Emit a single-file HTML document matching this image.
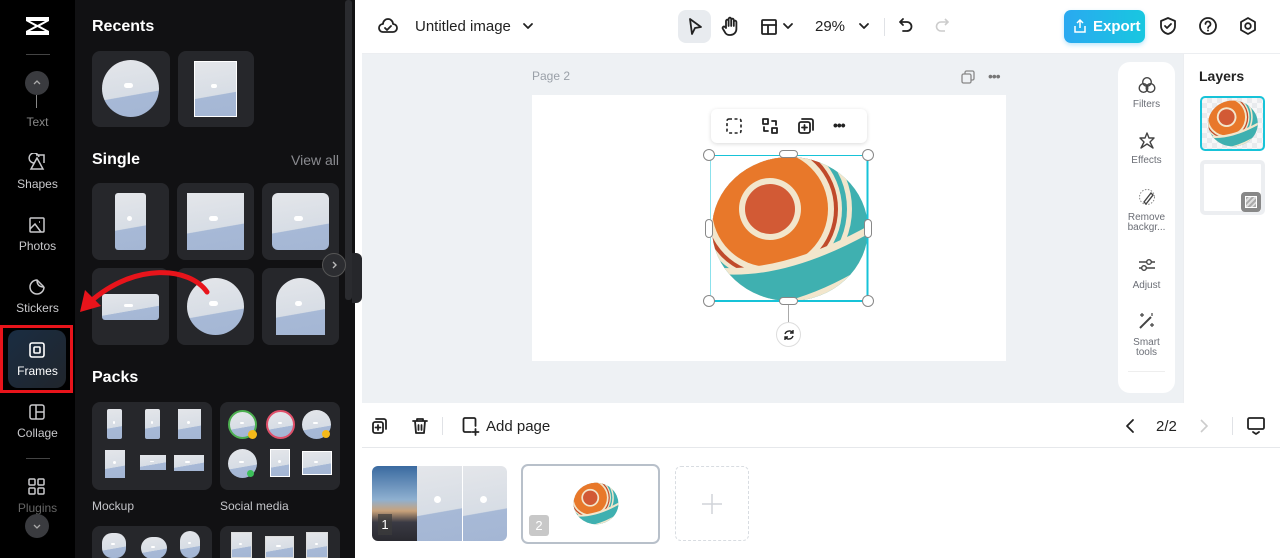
<!DOCTYPE html>
<html><head><meta charset="utf-8"><style>
*{box-sizing:border-box;margin:0;padding:0}
html,body{width:1280px;height:558px;overflow:hidden}
body{font-family:"Liberation Sans",sans-serif;background:#fff;position:relative}
.a{position:absolute}
.rail{left:0;top:0;width:75px;height:558px;background:#000}
.panel{left:75px;top:0;width:280px;height:558px;background:#111113}
.rl{position:absolute;left:0;width:75px;text-align:center;color:#c9c9cc;font-size:12px}
.card{position:absolute;background:#26272b;border-radius:8px}
.sky{position:absolute;background:linear-gradient(170deg,#e4e6ea 0%,#d7dde5 60%,#a7b9d6 61%,#a4b6d4 100%);overflow:hidden}
.sky:after{content:"";position:absolute;left:38%;top:40%;width:16%;height:9%;background:#fff;border-radius:6px}
.h{color:#fff;font-weight:bold;font-size:16px;position:absolute;left:92px}
.ic{stroke:#c9c9cc;fill:none;stroke-width:1.5}
.dk{stroke:#222;fill:none;stroke-width:1.8;stroke-linecap:round;stroke-linejoin:round}
.tl{position:absolute;left:0;width:57px;text-align:center;font-size:10px;color:#6b6e76;line-height:10px}
</style></head><body>
<svg width="0" height="0" style="position:absolute"><defs>
<clipPath id="c"><ellipse cx="80" cy="74" rx="78" ry="72"/></clipPath>
<g id="ball"><g clip-path="url(#c)">
<rect width="160" height="148" fill="#3fb0b0"/>
<circle cx="60" cy="54" r="82" fill="#f2e6cc"/>
<circle cx="60" cy="54" r="77" fill="#3fb0b0"/>
<circle cx="60" cy="54" r="72" fill="#f2e6cc"/>
<circle cx="60" cy="54" r="68" fill="#c04a2a"/>
<circle cx="60" cy="54" r="64" fill="#f2e6cc"/>
<circle cx="60" cy="54" r="58" fill="#e8782a"/>
<path d="M0 112 Q70 120 160 70 L160 148 L0 148Z" fill="#f2e6cc"/>
<path d="M0 118 Q70 128 160 78 L160 148 L0 148Z" fill="#3fb0b0"/>
<path d="M60 150 Q110 140 160 108 L160 116 Q110 146 70 152Z" fill="#f2e6cc"/>
<circle cx="60" cy="54" r="31" fill="#f2e6cc"/>
<circle cx="60" cy="54" r="25" fill="#d25a35"/>
</g></g></defs></svg>
<div class="a rail"></div>
<div class="a panel"></div>
<!-- rail -->
<svg class="a" style="left:24px;top:14px" width="27" height="24" viewBox="0 0 27 24"><path d="M2 3 L25 3 L25 7 L16 12 L25 17 L25 21 L2 21 L2 17 L11 12 L2 7Z" fill="#fff"/><path d="M6 7 L21 7 L13.5 11Z M6 17 L21 17 L13.5 13Z" fill="#000"/></svg>
<div class="a" style="left:26px;top:54px;width:24px;height:1px;background:#444"></div>
<div class="a" style="left:25px;top:71px;width:24px;height:24px;border-radius:50%;background:#3a3b3f"></div>
<svg class="a" style="left:31px;top:77px" width="12" height="12"><path d="M3 7 L6 4 L9 7" stroke="#aaa" fill="none" stroke-width="1.3"/></svg>
<div class="a" style="left:36px;top:95px;width:1px;height:13px;background:#888"></div>
<div class="rl" style="top:115px;color:#888">Text</div>
<svg class="a" style="left:27px;top:153px" width="20" height="20"><path class="ic" d="M7 10 a5 5 0 1 1 5-6 M10 5 L16 16 L4 16Z M9 2 h8 v8"/></svg>
<div class="rl" style="top:177px">Shapes</div>
<svg class="a" style="left:28px;top:216px" width="18" height="18"><rect class="ic" x="2" y="2" width="14" height="14" rx="1"/><path class="ic" d="M2 13 L7 8 L13 16 M11 6 h1"/></svg>
<div class="rl" style="top:239px">Photos</div>
<svg class="a" style="left:27px;top:277px" width="20" height="20"><path class="ic" d="M17 10 a7 7 0 1 1 -7-7 L17 10 M10 3 q0 7 7 7"/></svg>
<div class="rl" style="top:301px">Stickers</div>
<div class="a" style="left:0;top:325px;width:73px;height:68px;border:3px solid #e8141b"></div>
<div class="a" style="left:8px;top:330px;width:58px;height:58px;border-radius:10px;background:linear-gradient(135deg,#1a2d42,#20252c)"></div>
<svg class="a" style="left:28px;top:341px" width="18" height="18"><rect x="2" y="2" width="14" height="14" rx="2" stroke="#fff" fill="none" stroke-width="1.6"/><rect x="6" y="6" width="6" height="6" rx="1" stroke="#fff" fill="none" stroke-width="1.6"/></svg>
<div class="rl" style="top:364px;color:#fff">Frames</div>
<svg class="a" style="left:28px;top:403px" width="18" height="18"><rect class="ic" x="2" y="2" width="14" height="14" rx="2"/><path class="ic" d="M8 2 V16 M8 9 H16"/></svg>
<div class="rl" style="top:426px">Collage</div>
<div class="a" style="left:26px;top:458px;width:24px;height:1px;background:#444"></div>
<svg class="a" style="left:27px;top:477px" width="20" height="20"><rect class="ic" x="2" y="2" width="6" height="6" rx="1"/><rect class="ic" x="11" y="2" width="6" height="6" rx="1"/><rect class="ic" x="2" y="11" width="6" height="6" rx="1"/><rect class="ic" x="11" y="11" width="6" height="6" rx="1"/></svg>
<div class="rl" style="top:501px;color:#666">Plugins</div>
<div class="a" style="left:25px;top:514px;width:24px;height:24px;border-radius:50%;background:#3a3b3f"></div>
<svg class="a" style="left:31px;top:520px" width="12" height="12"><path d="M3 5 L6 8 L9 5" stroke="#aaa" fill="none" stroke-width="1.3"/></svg>
<!-- panel -->
<div class="h" style="top:18px">Recents</div>
<div class="card" style="left:92px;top:51px;width:78px;height:76px"></div>
<div class="sky" style="left:102px;top:60px;width:57px;height:57px;border-radius:50%"></div>
<div class="card" style="left:178px;top:51px;width:76px;height:76px"></div>
<div class="sky" style="left:194px;top:61px;width:43px;height:56px;border:1px solid #fff"></div>
<div class="h" style="top:151px">Single</div>
<div class="a" style="left:291px;top:152px;color:#8a8b90;font-size:14px">View all</div>
<div class="card" style="left:92px;top:183px;width:77px;height:77px"></div>
<div class="sky" style="left:115px;top:193px;width:31px;height:57px;border-radius:3px"></div>
<div class="card" style="left:177px;top:183px;width:77px;height:77px"></div>
<div class="sky" style="left:187px;top:193px;width:57px;height:57px"></div>
<div class="card" style="left:262px;top:183px;width:77px;height:77px"></div>
<div class="sky" style="left:272px;top:193px;width:57px;height:57px;border-radius:6px"></div>
<div class="card" style="left:92px;top:268px;width:77px;height:77px"></div>
<div class="sky" style="left:102px;top:294px;width:57px;height:26px;border-radius:3px"></div>
<div class="card" style="left:177px;top:268px;width:77px;height:77px"></div>
<div class="sky" style="left:187px;top:278px;width:57px;height:57px;border-radius:50%"></div>
<div class="card" style="left:262px;top:268px;width:77px;height:77px"></div>
<div class="sky" style="left:276px;top:278px;width:49px;height:57px;border-radius:25px 25px 0 0"></div>
<div class="a" style="left:345px;top:0;width:7px;height:300px;border-radius:3px;background:#2a2b2f"></div>
<div class="a" style="left:322px;top:253px;width:24px;height:24px;border-radius:50%;background:#2c2d31;border:1px solid #555"></div>
<svg class="a" style="left:328px;top:259px" width="12" height="12"><path d="M5 3 L8 6 L5 9" stroke="#bbb" fill="none" stroke-width="1.4"/></svg>
<div class="a" style="left:352px;top:253px;width:10px;height:50px;border-radius:0 6px 6px 0;background:#26272b"></div>
<svg class="a" style="left:75px;top:262px" width="140" height="60"><path d="M132 30 C115 5 60 0 15 40" stroke="#e8141b" stroke-width="5" fill="none" stroke-linecap="round"/><path d="M5 50 L10 28 L26 44Z" fill="#e8141b"/></svg>
<div class="h" style="top:369px">Packs</div>
<div class="card" style="left:92px;top:402px;width:120px;height:88px"></div>
<div class="sky" style="left:107px;top:409px;width:15px;height:30px;border-radius:2px"></div>
<div class="sky" style="left:145px;top:409px;width:15px;height:30px;border-radius:2px"></div>
<div class="sky" style="left:178px;top:409px;width:23px;height:30px"></div>
<div class="sky" style="left:105px;top:450px;width:20px;height:28px"></div>
<div class="sky" style="left:140px;top:455px;width:26px;height:15px"></div>
<div class="sky" style="left:174px;top:455px;width:30px;height:16px"></div>
<div class="card" style="left:220px;top:402px;width:120px;height:88px"></div>
<div class="sky" style="left:228px;top:410px;width:29px;height:29px;border-radius:50%;border:2px solid #4caf50"></div>
<div class="sky" style="left:266px;top:410px;width:29px;height:29px;border-radius:50%;border:2px solid #e0506a"></div>
<div class="sky" style="left:302px;top:410px;width:29px;height:29px;border-radius:50%"></div>
<div class="a" style="left:248px;top:430px;width:9px;height:9px;border-radius:50%;background:#f5b91a"></div>
<div class="a" style="left:322px;top:430px;width:8px;height:8px;border-radius:50%;background:#f5b91a"></div>
<div class="sky" style="left:228px;top:449px;width:29px;height:29px;border-radius:50%"></div>
<div class="a" style="left:247px;top:470px;width:7px;height:7px;border-radius:50%;background:#3cbf5a"></div>
<div class="sky" style="left:270px;top:449px;width:20px;height:28px;border:1px solid #fff"></div>
<div class="sky" style="left:302px;top:451px;width:30px;height:24px;border:1px solid #fff"></div>
<div class="a" style="left:92px;top:499px;color:#c4c5c9;font-size:12px">Mockup</div>
<div class="a" style="left:220px;top:499px;color:#c4c5c9;font-size:12px">Social media</div>
<div class="card" style="left:92px;top:526px;width:120px;height:40px"></div>
<div class="sky" style="left:102px;top:533px;width:24px;height:25px;border-radius:10px"></div>
<div class="sky" style="left:141px;top:537px;width:26px;height:22px;border-radius:11px"></div>
<div class="sky" style="left:180px;top:531px;width:20px;height:27px;border-radius:10px"></div>
<div class="card" style="left:220px;top:526px;width:120px;height:40px"></div>
<div class="sky" style="left:231px;top:532px;width:21px;height:26px;border:1px solid #ddd"></div>
<div class="sky" style="left:265px;top:536px;width:29px;height:22px;border:1px solid #ddd"></div>
<div class="sky" style="left:306px;top:532px;width:22px;height:26px;border:1px solid #ddd"></div>
<!-- top bar -->
<div class="a" style="left:362px;top:0;width:918px;height:54px;background:#fff;border-bottom:1px solid #eceef1"></div>
<svg class="a" style="left:378px;top:17px" width="20" height="18"><path class="dk" d="M5 15 a4 4 0 0 1 0-8 a5 5 0 0 1 10 0 a4 4 0 0 1 0 8Z M7 11 l2 2 l4-4"/></svg>
<div class="a" style="left:415px;top:18px;font-size:15px;color:#222">Untitled image</div>
<svg class="a" style="left:522px;top:20px" width="12" height="12"><path class="dk" d="M2 4 L6 8 L10 4"/></svg>
<div class="a" style="left:678px;top:10px;width:33px;height:33px;border-radius:8px;background:#e8ebef"></div>
<svg class="a" style="left:686px;top:17px" width="18" height="20"><path class="dk" d="M4 2 L15 10 L9 11 L6 17Z"/></svg>
<svg class="a" style="left:720px;top:16px" width="20" height="22"><path class="dk" d="M6 12 V5 a1.3 1.3 0 0 1 2.6 0 V10 V3 a1.3 1.3 0 0 1 2.6 0 V10 V4 a1.3 1.3 0 0 1 2.6 0 V10 V6 a1.3 1.3 0 0 1 2.6 0 V13 a6 6 0 0 1-6 6 h-1 a5 5 0 0 1-4-2 L3 13 a1.3 1.3 0 0 1 2-2Z"/></svg>
<svg class="a" style="left:760px;top:18px" width="18" height="18"><rect class="dk" x="2" y="2" width="14" height="14" rx="1"/><path class="dk" d="M2 7 H16 M8 7 V16"/></svg>
<svg class="a" style="left:782px;top:21px" width="12" height="10"><path class="dk" d="M2 3 L6 7 L10 3"/></svg>
<div class="a" style="left:815px;top:18px;font-size:15px;color:#222">29%</div>
<svg class="a" style="left:858px;top:21px" width="12" height="10"><path class="dk" d="M2 3 L6 7 L10 3"/></svg>
<div class="a" style="left:884px;top:18px;width:1px;height:18px;background:#e0e2e6"></div>
<svg class="a" style="left:897px;top:17px" width="18" height="18"><path class="dk" d="M6 2 L3 5 L6 8 M3 5 H10 a4.5 4.5 0 0 1 0 9 H6"/></svg>
<svg class="a" style="left:933px;top:17px" width="18" height="18"><path d="M12 2 L15 5 L12 8 M15 5 H8 a4.5 4.5 0 0 0 0 9 H12" stroke="#ccc" fill="none" stroke-width="1.6"/></svg>
<div class="a" style="left:1064px;top:10px;width:81px;height:33px;border-radius:7px;background:linear-gradient(90deg,#2aa9f0,#18c7e0);box-shadow:0 2px 5px rgba(30,170,240,.3)"></div>
<svg class="a" style="left:1072px;top:18px" width="16" height="16"><path d="M3 8 V14 H13 V8 M8 10 V2 M5 5 L8 2 L11 5" stroke="#fff" fill="none" stroke-width="1.5"/></svg>
<div class="a" style="left:1093px;top:18px;font-size:15px;font-weight:bold;color:#fff">Export</div>
<svg class="a" style="left:1158px;top:16px" width="20" height="20"><path class="dk" d="M10 2 L17 5 V10 C17 14 14 17 10 18 C6 17 3 14 3 10 V5Z M7 10 l2 2 l4-4"/></svg>
<svg class="a" style="left:1198px;top:16px" width="20" height="20"><circle class="dk" cx="10" cy="10" r="8"/><path class="dk" d="M7.5 8 a2.5 2.5 0 1 1 3.5 2.3 C10 11 10 11.5 10 12"/><circle cx="10" cy="14.5" r="1" fill="#222"/></svg>
<svg class="a" style="left:1238px;top:16px" width="20" height="20"><path class="dk" d="M10 2 L17 6 V14 L10 18 L3 14 V6Z"/><circle class="dk" cx="10" cy="10" r="2.8"/></svg>
<!-- canvas -->
<div class="a" style="left:362px;top:54px;width:821px;height:349px;background:#eef1f4"></div>
<div class="a" style="left:532px;top:69px;font-size:12px;color:#9aa0a8">Page 2</div>
<svg class="a" style="left:960px;top:69px" width="16" height="16"><rect x="5" y="2" width="9" height="9" rx="1.5" stroke="#888" fill="none" stroke-width="1.3"/><rect x="2" y="5" width="9" height="9" rx="1.5" stroke="#888" fill="#eef1f4" stroke-width="1.3"/></svg>
<div class="a" style="left:988px;top:68px;font-size:14px;color:#777;letter-spacing:-1px">•••</div>
<div class="a" style="left:532px;top:95px;width:474px;height:266px;background:#fff"></div>
<svg class="a" style="left:710px;top:155px" width="160" height="148" viewBox="0 0 160 148"><use href="#ball"/>
<rect x="-0.5" y="0" width="158" height="146" fill="none" stroke="#17c3d8" stroke-width="2"/></svg>
<div class="a" style="left:711px;top:109px;width:156px;height:34px;background:#fff;border-radius:6px;box-shadow:0 1px 4px rgba(0,0,0,.15)"></div>
<svg class="a" style="left:725px;top:117px" width="18" height="18"><rect x="2" y="2" width="14" height="14" rx="2" stroke="#222" fill="none" stroke-width="1.6" stroke-dasharray="3 2.5"/></svg>
<svg class="a" style="left:761px;top:117px" width="18" height="18"><rect class="dk" x="2" y="2" width="5" height="5"/><rect class="dk" x="11" y="11" width="5" height="5"/><path class="dk" d="M11 4 H15 V8 M7 14 H3 V10"/></svg>
<svg class="a" style="left:797px;top:117px" width="18" height="18"><rect class="dk" x="2" y="5" width="11" height="11" rx="2"/><path class="dk" d="M5 2 H14 a2 2 0 0 1 2 2 V13 M7.5 8 V13 M5 10.5 H10"/></svg>
<div class="a" style="left:833px;top:117px;font-size:14px;color:#222;font-weight:bold;letter-spacing:-1px">•••</div>
<div class="a" style="left:703px;top:149px;width:12px;height:12px;border-radius:50%;background:#fff;border:1px solid #888"></div>
<div class="a" style="left:862px;top:149px;width:12px;height:12px;border-radius:50%;background:#fff;border:1px solid #888"></div>
<div class="a" style="left:703px;top:295px;width:12px;height:12px;border-radius:50%;background:#fff;border:1px solid #888"></div>
<div class="a" style="left:862px;top:295px;width:12px;height:12px;border-radius:50%;background:#fff;border:1px solid #888"></div>
<div class="a" style="left:779px;top:150px;width:19px;height:8px;border-radius:4px;background:#fff;border:1px solid #888"></div>
<div class="a" style="left:779px;top:297px;width:19px;height:8px;border-radius:4px;background:#fff;border:1px solid #888"></div>
<div class="a" style="left:705px;top:219px;width:8px;height:19px;border-radius:4px;background:#fff;border:1px solid #888"></div>
<div class="a" style="left:864px;top:219px;width:8px;height:19px;border-radius:4px;background:#fff;border:1px solid #888"></div>
<div class="a" style="left:788px;top:305px;width:1px;height:17px;background:#aaa"></div>
<div class="a" style="left:776px;top:322px;width:25px;height:25px;border-radius:50%;background:#fff;border:1px solid #ddd"></div>
<svg class="a" style="left:782px;top:328px" width="14" height="14"><path d="M11 5 a4.5 4.5 0 0 0-8 1 M3 9 a4.5 4.5 0 0 0 8-1 M11 2 V5 H8 M3 12 V9 H6" stroke="#222" fill="none" stroke-width="1.4"/></svg>
<!-- tools -->
<div class="a" style="left:1118px;top:62px;width:57px;height:331px;background:#fff;border-radius:12px"></div>
<svg class="a" style="left:1137px;top:75px" width="20" height="20"><circle cx="10" cy="7" r="4.3" stroke="#444" fill="none" stroke-width="1.4"/><circle cx="6.5" cy="13" r="4.3" stroke="#444" fill="none" stroke-width="1.4"/><circle cx="13.5" cy="13" r="4.3" stroke="#444" fill="none" stroke-width="1.4"/></svg>
<div class="tl" style="left:1118px;top:100px">Filters</div>
<svg class="a" style="left:1137px;top:131px" width="20" height="20"><path d="M10 2 L12 7 L17 7 L13 11 L16 17 L10 13 L4 17 L7 11 L3 7 L8 7Z" stroke="#444" fill="none" stroke-width="1.4" stroke-linejoin="round"/></svg>
<div class="tl" style="left:1118px;top:156px">Effects</div>
<svg class="a" style="left:1137px;top:187px" width="20" height="20"><circle cx="10" cy="10" r="7.5" stroke="#888" fill="none" stroke-width="1" stroke-dasharray="1.5 1.5"/><path d="M7 15 L14 6 L16 8 L9 17Z" stroke="#444" fill="#fff" stroke-width="1.4"/></svg>
<div class="tl" style="left:1118px;top:213px">Remove<br>backgr...</div>
<svg class="a" style="left:1137px;top:255px" width="20" height="20"><path d="M2 7 H18 M2 13 H18" stroke="#444" stroke-width="1.4"/><circle cx="12" cy="7" r="2.3" fill="#fff" stroke="#444" stroke-width="1.4"/><circle cx="7" cy="13" r="2.3" fill="#fff" stroke="#444" stroke-width="1.4"/></svg>
<div class="tl" style="left:1118px;top:281px">Adjust</div>
<svg class="a" style="left:1137px;top:311px" width="20" height="20"><path d="M3 17 L14 6" stroke="#444" stroke-width="2"/><path d="M5 2 V6 M3 4 H7 M15 12 V16 M13 14 H17 M15 2 v3" stroke="#444" stroke-width="1.2"/></svg>
<div class="tl" style="left:1118px;top:338px">Smart<br>tools</div>
<div class="a" style="left:1128px;top:371px;width:37px;height:1px;background:#eee"></div>
<!-- layers -->
<div class="a" style="left:1183px;top:54px;width:97px;height:349px;background:#fff;border-left:1px solid #eceef1"></div>
<div class="a" style="left:1199px;top:68px;font-size:14px;font-weight:bold;color:#222">Layers</div>
<div class="a" style="left:1200px;top:96px;width:65px;height:55px;border:2px solid #17c3d8;border-radius:5px;background:repeating-conic-gradient(#e8eaed 0 25%,#f7f7f8 0 50%) 0 0/10px 10px"></div>
<svg class="a" style="left:1207px;top:100px" width="52" height="47" viewBox="0 0 160 148"><use href="#ball"/></svg>
<div class="a" style="left:1200px;top:160px;width:65px;height:55px;border:4px solid #eceef1;border-radius:5px;background:#fff"></div>
<div class="a" style="left:1241px;top:192px;width:20px;height:20px;border-radius:4px;background:#888"></div>
<div class="a" style="left:1245px;top:196px;width:12px;height:12px;border:1px solid #fff;background:repeating-linear-gradient(135deg,#aaa 0 2px,#ddd 2px 4px)"></div>
<!-- bottom -->
<div class="a" style="left:362px;top:403px;width:918px;height:45px;background:#fff;border-bottom:1px solid #e6e8eb"></div>
<svg class="a" style="left:371px;top:417px" width="18" height="18"><rect class="dk" x="2" y="5" width="10" height="11" rx="2"/><path class="dk" d="M5 2 H13 a2 2 0 0 1 2 2 V12 M7 8 V13 M4.5 10.5 H9.5"/></svg>
<svg class="a" style="left:411px;top:417px" width="18" height="18"><path class="dk" d="M2 4 H16 M6 4 V2 H12 V4 M4 4 L5 16 H13 L14 4 M7.5 8 V13 M10.5 8 V13"/></svg>
<div class="a" style="left:442px;top:417px;width:1px;height:18px;background:#e0e2e6"></div>
<svg class="a" style="left:461px;top:416px" width="20" height="20"><path class="dk" d="M10 16 H4 a1.5 1.5 0 0 1-1.5-1.5 V3.5 A1.5 1.5 0 0 1 4 2 H13 a1.5 1.5 0 0 1 1.5 1.5 V10 M14.5 13 V19 M11.5 16 H17.5"/></svg>
<div class="a" style="left:486px;top:418px;font-size:15px;color:#222">Add page</div>
<svg class="a" style="left:1122px;top:417px" width="16" height="18"><path class="dk" d="M11 3 L5 9 L11 15"/></svg>
<div class="a" style="left:1156px;top:418px;font-size:15px;color:#222">2/2</div>
<svg class="a" style="left:1196px;top:417px" width="16" height="18"><path d="M5 3 L11 9 L5 15" stroke="#ccc" fill="none" stroke-width="1.6"/></svg>
<div class="a" style="left:1232px;top:417px;width:1px;height:18px;background:#e0e2e6"></div>
<svg class="a" style="left:1246px;top:416px" width="20" height="20"><rect class="dk" x="2" y="2" width="16" height="11" rx="1.5"/><path class="dk" d="M7 16 L10 18 L13 16"/></svg>
<div class="a" style="left:372px;top:466px;width:135px;height:75px;border-radius:6px;overflow:hidden">
 <div class="a" style="left:0;top:0;width:45px;height:75px;background:linear-gradient(180deg,#3a6aa0 0%,#8fb0d0 45%,#c9a27a 60%,#3a3a44 75%,#2a2a30 100%)"></div>
 <div class="sky" style="left:45px;top:0;width:45px;height:75px"></div>
 <div class="sky" style="left:91px;top:0;width:44px;height:75px"></div>
 <div class="a" style="left:90px;top:0;width:1px;height:75px;background:#fff"></div>
 <div class="a" style="left:6px;top:48px;width:14px;height:21px;background:rgba(60,60,60,.7);color:#fff;font-size:13px;text-align:center;line-height:21px">1</div>
</div>
<div class="a" style="left:521px;top:464px;width:139px;height:80px;border:2px solid #b8c0ca;border-radius:7px;background:#fff"></div>
<svg class="a" style="left:573px;top:482px" width="46" height="43" viewBox="0 0 160 148"><use href="#ball"/></svg>
<div class="a" style="left:529px;top:515px;width:20px;height:21px;border-radius:3px;background:#c8c8c8;color:#fff;font-size:13px;text-align:center;line-height:21px">2</div>
<div class="a" style="left:675px;top:466px;width:74px;height:75px;border:1px dashed #d8dce1;border-radius:6px"></div>
<svg class="a" style="left:700px;top:492px" width="24" height="24"><path d="M12 2 V22 M2 12 H22" stroke="#d0d4d9" stroke-width="1.5"/></svg>
</body></html>
